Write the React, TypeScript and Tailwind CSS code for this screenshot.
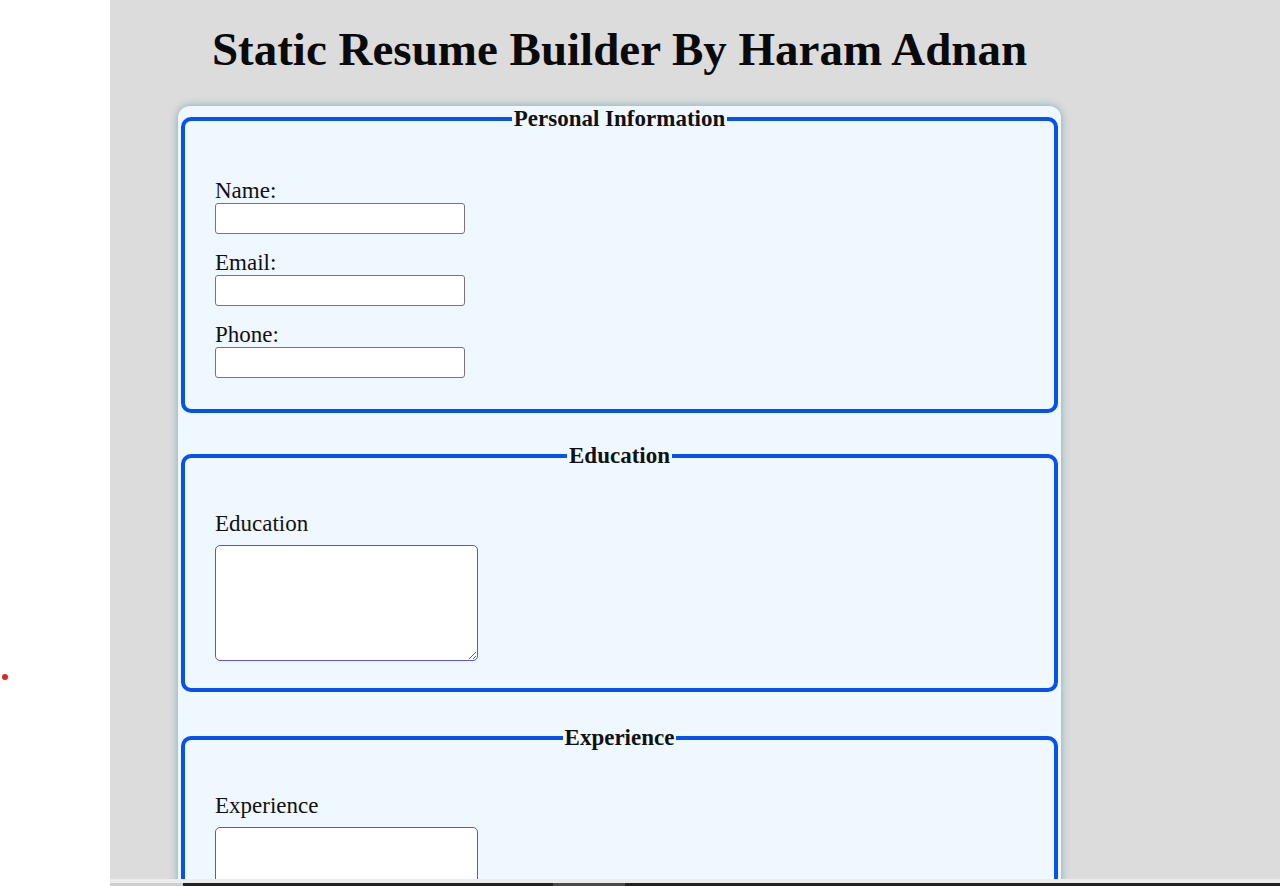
import React from 'react';

function TextField({ label, type = 'text' }: { label: string; type?: string }) {
  return (
    <div className="flex flex-col">
      <label className="text-[23px] leading-[25px] text-[#111]">{label}</label>
      <input
        type={type}
        className="w-[250px] h-[31px] bg-white border border-[#767676] rounded-[3px] outline-none"
      />
    </div>
  );
}

function AreaField({ label }: { label: string }) {
  return (
    <div className="flex flex-col">
      <label className="text-[23px] leading-[25px] text-[#111]">{label}</label>
      <textarea className="mt-[9px] w-[263px] h-[116px] bg-white border border-[#5656d8] rounded-[5px] outline-none" />
    </div>
  );
}

function Section({
  title,
  children,
  className,
  bodyClass,
}: {
  title: string;
  children: React.ReactNode;
  className: string;
  bodyClass: string;
}) {
  return (
    <fieldset className={`${className} border-[4px] border-[#0652ee] rounded-[10px] px-[30px]`}>
      <legend className="mx-auto px-[2px] text-[23px] leading-[26px] font-bold text-[#111]">{title}</legend>
      <div className={bodyClass}>{children}</div>
    </fieldset>
  );
}

export default function App() {
  return (
    <div className="h-[886px] overflow-hidden flex flex-col bg-white font-['Liberation_Serif',serif]">
      <div className="flex h-[879px]">
        <div className="w-[110px] shrink-0 bg-white relative">
          <div className="absolute left-[2px] top-[674px] w-[6px] h-[6px] rounded-full bg-[#e02424]" />
        </div>
        <div className="flex-1 bg-[#dcdcdc] pl-[68px] overflow-hidden">
          <div className="w-[883px]">
            <h1 className="text-center text-[47px] leading-[54px] font-bold text-[#0a0a0a] pt-[22px]">
              Static Resume Builder By Haram Adnan
            </h1>
            <div className="mt-[30px] bg-[#f0f8ff] rounded-[12px] px-[3px] pb-[20px] shadow-[0_0_8px_rgba(20,110,140,0.45)]">
              <Section title="Personal Information" className="" bodyClass="pt-[46px] pb-[31px]">
                <div className="flex flex-col gap-[16px]">
                  <TextField label="Name:" />
                  <TextField label="Email:" type="email" />
                  <TextField label="Phone:" />
                </div>
              </Section>
              <Section title="Education" className="mt-[30px]" bodyClass="pt-[42px] pb-[27px]">
                <AreaField label="Education" />
              </Section>
              <Section title="Experience" className="mt-[33px]" bodyClass="pt-[42px] pb-[27px]">
                <AreaField label="Experience" />
              </Section>
            </div>
          </div>
        </div>
      </div>
      <div className="h-[4px] flex">
        <div className="w-[110px] bg-white" />
        <div className="flex-1 bg-[#ececec]" />
      </div>
      <div className="h-[3px] flex">
        <div className="w-[110px] bg-white" />
        <div className="w-[73px] bg-[#cfcfcf]" />
        <div className="w-[370px] bg-[#222]" />
        <div className="w-[72px] bg-[#4a4a4a]" />
        <div className="flex-1 bg-[#222]" />
      </div>
    </div>
  );
}
